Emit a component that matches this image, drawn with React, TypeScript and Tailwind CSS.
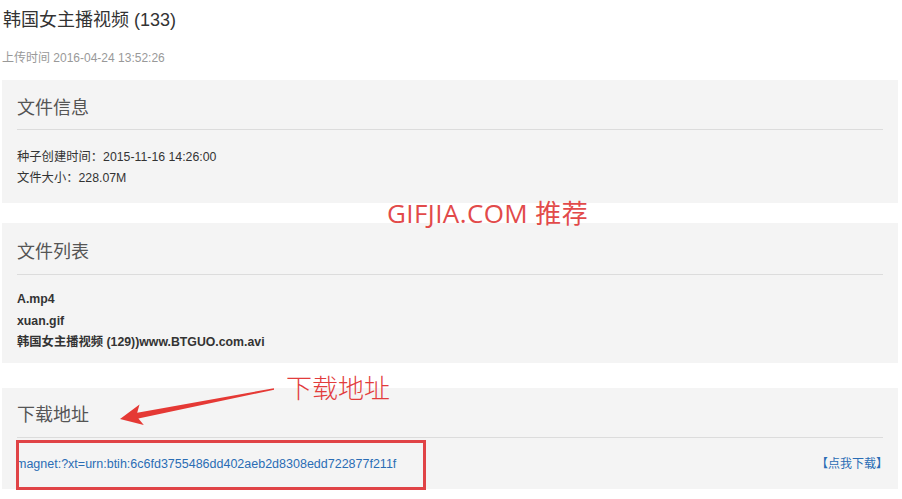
import React from 'react';

const Panel: React.FC<{ title: string; className?: string; headClass?: string; children: React.ReactNode }> = ({
  title,
  className = '',
  headClass = '',
  children,
}) => (
  <div className={`bg-[#f4f4f4] px-[15px] ${className}`}>
    <h3 className={`text-[18px] leading-[24px] text-[#555] font-normal border-b border-[#dcdcdc] ${headClass}`}>{title}</h3>
    {children}
  </div>
);

const App: React.FC = () => {
  return (
    <div className="relative w-[902px] h-[499px] overflow-hidden bg-white font-['Liberation_Sans','Noto_Sans_CJK_SC',sans-serif] text-[#333]">
      <div className="pl-[2px] pr-[4px]">
        <h1 className="pt-[8px] pl-[1px] text-[18px] leading-[24px] font-normal text-[#333]">韩国女主播视频 (133)</h1>
        <p className="mt-[17px] text-[12px] leading-[18px] text-[#999]">上传时间 2016-04-24 13:52:26</p>

        <Panel title="文件信息" className="mt-[13px] pt-[16px] pb-[14px]" headClass="pb-[9px]">
          <div className="mt-[17px] text-[12.3px] leading-[21px]">
            <p>种子创建时间：2015-11-16 14:26:00</p>
            <p>文件大小：228.07M</p>
          </div>
        </Panel>

        <Panel title="文件列表" className="mt-[20px] pt-[17px] pb-[9px]" headClass="pb-[10px]">
          <div className="mt-[14px] text-[12.3px] leading-[21.5px] font-bold">
            <p>A.mp4</p>
            <p>xuan.gif</p>
            <p>韩国女主播视频 (129))www.BTGUO.com.avi</p>
          </div>
        </Panel>

        <Panel title="下载地址" className="mt-[25px] pt-[15px] pb-[14px]" headClass="pb-[10px]">
          <div className="mt-[16px] flex items-center justify-between text-[12.5px] leading-[21px] text-[#2a6db5]">
            <a href="#" className="-ml-[1px]">magnet:?xt=urn:btih:6c6fd3755486dd402aeb2d8308edd722877f211f</a>
            <a href="#" className="-mr-[5px] text-[12px]">【点我下载】</a>
          </div>
        </Panel>
      </div>

      {/* watermark */}
      <div className="absolute left-[387px] top-[197px] text-[26px] leading-[32px] tracking-[0.4px] text-[#e24a4a] font-['Open_Sans','Noto_Sans_CJK_SC',sans-serif]">
        GIFJIA.COM 推荐
      </div>

      {/* annotation */}
      <div className="absolute left-[286px] top-[370px] text-[26px] leading-[34px] text-[#e23c3c] font-light font-['Noto_Sans_CJK_SC',sans-serif]">
        下载地址
      </div>
      <svg className="absolute left-0 top-0" width="902" height="499" viewBox="0 0 902 499">
        <polygon
          points="120,419 139.5,404.5 137.2,412.8 273.9,388.3 274.1,389.7 138.4,418.4 143.8,425"
          fill="#e53935"
        />
      </svg>
      <div className="absolute left-[16px] top-[440px] w-[410px] h-[50px] border-[3px] border-[#e04346]" />
    </div>
  );
};

export default App;
